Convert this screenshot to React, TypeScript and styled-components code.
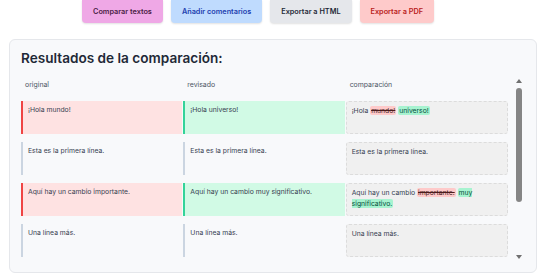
import React from 'react';
import styled, { createGlobalStyle } from 'styled-components';

const GlobalStyle = createGlobalStyle`
  html, body {
    margin: 0;
    padding: 0;
    background: #ffffff;
    font-family: Inter, "Noto Sans", sans-serif;
    color: #1f2937;
  }
`

const Page = styled.div`
  width: 553px;
  height: 279px;
  overflow: hidden;
  box-sizing: border-box;
  padding: 0 16px 0 9px;
`
const Toolbar = styled.div`
  display: flex;
  justify-content: center;
  gap: 8px;
  padding-right: 30px;
  height: 23px;
`
const tones: Record<string, { bg: string; fg: string }> = {
  purple: { bg: '#efa8e6', fg: '#4a1d45' },
  blue: { bg: '#bfdbfe', fg: '#1e40af' },
  gray: { bg: '#e5e7eb', fg: '#1f2937' },
  red: { bg: '#fecaca', fg: '#b91c1c' },
}
const ToolButton = styled.button<{ $tone: string }>`
  border: none;
  border-radius: 0 0 4px 4px;
  padding: 0 11px;
  height: 23px;
  font-family: Inter, sans-serif;
  font-size: 7.3px;
  font-weight: 600;
  background: ${({ $tone }) => tones[$tone].bg};
  color: ${({ $tone }) => tones[$tone].fg};
  box-shadow: 0 1px 2px rgba(0, 0, 0, 0.12);
`
const Panel = styled.div`
  margin-top: 16px;
  height: 234px;
  box-sizing: border-box;
  background: #f8f9fb;
  border: 1px solid #e5e7eb;
  border-radius: 6px;
  padding: 9px 10px 0 11px;
  display: flex;
  flex-direction: column;
`
const Title = styled.h2`
  margin: 0 0 8px 0;
  font-size: 13.6px;
  font-weight: 600;
  color: #1f2937;
  line-height: 18px;
`
const Scroller = styled.div`
  height: 188px;
  display: flex;
  gap: 3px;
`
const Viewport = styled.div`
  flex: 1;
  overflow: hidden;
`
const Rail = styled.div`
  width: 15px;
  display: flex;
  flex-direction: column;
  align-items: center;
`
const Arrow = styled.div<{ $down?: boolean }>`
  width: 0;
  height: 0;
  margin: 4px 0;
  border-left: 3.5px solid transparent;
  border-right: 3.5px solid transparent;
  ${({ $down }) => $down ? 'border-top: 4px solid #707070;' : 'border-bottom: 4px solid #707070;'}
`
const Thumb = styled.div`
  width: 6px;
  height: 114px;
  margin-top: 1px;
  border-radius: 3px;
  background: #858585;
`
const RailSpacer = styled.div`
  flex: 1;
`
const Grid = styled.div`
  display: grid;
  grid-template-columns: repeat(3, 1fr);
  row-gap: 8px;
`
const HeadCell = styled.div`
  font-size: 6.9px;
  color: #4b5563;
  padding: 5px 4px 0 4px;
  height: 13px;
`
const borders: Record<string, { bg: string; line: string }> = {
  removed: { bg: '#fee2e2', line: '#ef4444' },
  added: { bg: '#d1fae5', line: '#34d399' },
  same: { bg: 'transparent', line: '#cbd5e1' },
}
const Cell = styled.div<{ $kind: string }>`
  min-height: 33px;
  box-sizing: border-box;
  padding: 3px 5px;
  font-size: 6.8px;
  line-height: 11px;
  color: #374151;
  background: ${({ $kind }) => borders[$kind].bg};
  border-left: 2px solid ${({ $kind }) => borders[$kind].line};
  margin-right: 1px;
`
const DiffCell = styled.div`
  min-height: 33px;
  box-sizing: border-box;
  padding: 3px 5px;
  font-size: 6.8px;
  line-height: 11px;
  color: #374151;
  background: #f0f0f0;
  border: 1px dashed #dcdcdc;
  border-radius: 3px;
`
const Del = styled.span`
  background: #fecaca;
  text-decoration: line-through;
  color: #4b1d1d;
  border-radius: 2px;
  padding: 0 1px;
`
const Ins = styled.span`
  background: #a7f3d0;
  color: #064e3b;
  border-radius: 2px;
  padding: 0 1px;
`

type Row = {
  original: string
  revised: string
  changed: boolean
  diff: React.ReactNode
}

const ROWS: Row[] = [
  {
    original: '¡Hola mundo!',
    revised: '¡Hola universo!',
    changed: true,
    diff: <>¡Hola <Del>mundo!</Del> <Ins>universo!</Ins></>,
  },
  {
    original: 'Esta es la primera línea.',
    revised: 'Esta es la primera línea.',
    changed: false,
    diff: 'Esta es la primera línea.',
  },
  {
    original: 'Aquí hay un cambio importante.',
    revised: 'Aquí hay un cambio muy significativo.',
    changed: true,
    diff: <>Aquí hay un cambio <Del>importante.</Del> <Ins>muy significativo.</Ins></>,
  },
  {
    original: 'Una línea más.',
    revised: 'Una línea más.',
    changed: false,
    diff: 'Una línea más.',
  },
]

export default function App() {
  return (
    <>
      <GlobalStyle />
      <Page>
        <Toolbar>
          <ToolButton $tone="purple">Comparar textos</ToolButton>
          <ToolButton $tone="blue">Añadir comentarios</ToolButton>
          <ToolButton $tone="gray">Exportar a HTML</ToolButton>
          <ToolButton $tone="red">Exportar a PDF</ToolButton>
        </Toolbar>
        <Panel>
          <Title>Resultados de la comparación:</Title>
          <Scroller>
            <Viewport>
              <Grid>
                <HeadCell>original</HeadCell>
                <HeadCell>revisado</HeadCell>
                <HeadCell>comparación</HeadCell>
                {ROWS.map((row, i) => (
                  <React.Fragment key={i}>
                    <Cell $kind={row.changed ? 'removed' : 'same'}>{row.original}</Cell>
                    <Cell $kind={row.changed ? 'added' : 'same'}>{row.revised}</Cell>
                    <DiffCell>{row.diff}</DiffCell>
                  </React.Fragment>
                ))}
              </Grid>
            </Viewport>
            <Rail>
              <Arrow />
              <Thumb />
              <RailSpacer />
              <Arrow $down />
            </Rail>
          </Scroller>
        </Panel>
      </Page>
    </>
  )
}
